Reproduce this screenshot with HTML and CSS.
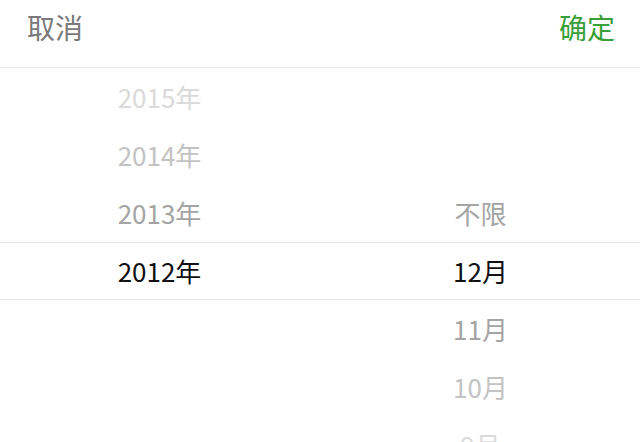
FILE: index.html
```html
<!DOCTYPE html>
<html lang="zh-CN">

<head>
  <meta charset="UTF-8">
  <meta name="viewport" content="width=device-width, initial-scale=1.0">
  <title>选择日期</title>
  <link rel="stylesheet" href="styles.css">
</head>

<body>
  <div class="toolbar">
    <span class="btn-cancel">取消</span>
    <span class="btn-ok">确定</span>
  </div>

  <div class="picker">
    <div class="row fade-3">
      <span class="cell">2015年</span>
      <span class="cell"></span>
    </div>
    <div class="row fade-2">
      <span class="cell">2014年</span>
      <span class="cell"></span>
    </div>
    <div class="row fade-1">
      <span class="cell">2013年</span>
      <span class="cell">不限</span>
    </div>
    <div class="row selected">
      <span class="cell">2012年</span>
      <span class="cell">12月</span>
    </div>
    <div class="row fade-1">
      <span class="cell"></span>
      <span class="cell">11月</span>
    </div>
    <div class="row fade-2">
      <span class="cell"></span>
      <span class="cell">10月</span>
    </div>
    <div class="row fade-3">
      <span class="cell"></span>
      <span class="cell">9月</span>
    </div>
  </div>
</body>

</html>
```

FILE: styles.css
```css
body {
  margin: 0;
  background-color: #fff;
  font-family: "Noto Sans CJK SC", "Noto Sans", sans-serif;
  overflow: hidden;
}

.toolbar {
  display: flex;
  justify-content: space-between;
  align-items: center;
  height: 68px;
  box-sizing: border-box;
  padding: 0 25px 14px 27px;
  border-bottom: 1px solid #e8e8e8;
  font-size: 28px;
  line-height: 1;
}

.btn-cancel {
  color: #7a7a7a;
}

.btn-ok {
  color: #3a9f3a;
}

.picker {
  display: flex;
  flex-direction: column;
}

.row {
  display: flex;
  height: 58px;
  box-sizing: border-box;
  font-size: 26px;
  line-height: 1;
}

.cell {
  flex: 1;
  display: flex;
  justify-content: center;
  align-items: center;
}

.cell:last-child {
  padding-left: 2px;
}

.selected {
  color: #111;
  border-top: 1px solid #e6e6e6;
  border-bottom: 1px solid #e6e6e6;
}

.fade-1 {
  color: #a4a4a4;
}

.fade-2 {
  color: #c3c3c3;
}

.fade-3 {
  color: #dadada;
}
```
